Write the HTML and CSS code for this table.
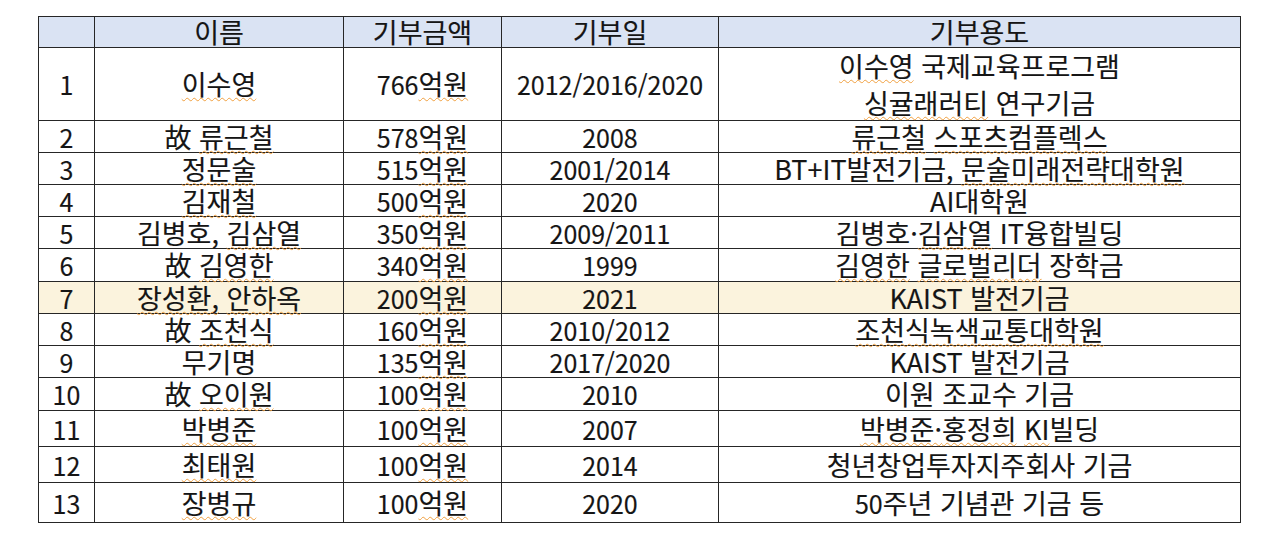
FILE: index.html
```html
<!DOCTYPE html>
<html lang="ko">
<head>
<meta charset="utf-8">
<title>기부 현황</title>
<link rel="stylesheet" href="styles.css">
</head>
<body>
<table class="donors">
  <colgroup>
    <col class="c-no"><col class="c-name"><col class="c-amt"><col class="c-date"><col class="c-use">
  </colgroup>
  <thead>
    <tr class="r-head"><th></th><th>이름</th><th>기부금액</th><th>기부일</th><th>기부용도</th></tr>
  </thead>
  <tbody>
    <tr class="r-tall"><td class="num">1</td><td><span class="sp">이수영</span></td><td><span class="n">766</span><span class="sp">억원</span></td><td class="num">2012/2016/2020</td><td class="two"><div class="ln"><span class="sp">이수영</span> 국제교육프로그램</div><div class="ln"><span class="sp">싱귤래러티</span> 연구기금</div></td></tr>
    <tr class="r32"><td class="num">2</td><td>故 <span class="sp">류근철</span></td><td><span class="n">578</span><span class="sp">억원</span></td><td class="num">2008</td><td><span class="sp">류근철</span> <span class="sp">스포츠컴플렉스</span></td></tr>
    <tr class="r32"><td class="num">3</td><td><span class="sp">정문술</span></td><td><span class="n">515</span><span class="sp">억원</span></td><td class="num">2001/2014</td><td>BT+IT발전기금, <span class="sp">문술미래전략대학원</span></td></tr>
    <tr class="r32"><td class="num">4</td><td><span class="sp">김재철</span></td><td><span class="n">500</span><span class="sp">억원</span></td><td class="num">2020</td><td>AI대학원</td></tr>
    <tr class="r32"><td class="num">5</td><td>김병호, <span class="sp">김삼열</span></td><td><span class="n">350</span><span class="sp">억원</span></td><td class="num">2009/2011</td><td>김병호·<span class="sp">김삼열</span> IT융합빌딩</td></tr>
    <tr class="r33"><td class="num">6</td><td>故 <span class="sp">김영한</span></td><td><span class="n">340</span><span class="sp">억원</span></td><td class="num">1999</td><td><span class="sp">김영한</span> <span class="sp">글로벌리더</span> 장학금</td></tr>
    <tr class="r32 hl"><td class="num">7</td><td><span class="sp">장성환,</span> <span class="sp">안하옥</span></td><td><span class="n">200</span><span class="sp">억원</span></td><td class="num">2021</td><td>KAIST 발전기금</td></tr>
    <tr class="r32"><td class="num">8</td><td>故 <span class="sp">조천식</span></td><td><span class="n">160</span><span class="sp">억원</span></td><td class="num">2010/2012</td><td><span class="sp">조천식녹색교통대학원</span></td></tr>
    <tr class="r32"><td class="num">9</td><td>무기명</td><td><span class="n">135</span><span class="sp">억원</span></td><td class="num">2017/2020</td><td>KAIST 발전기금</td></tr>
    <tr class="r33"><td class="num">10</td><td>故 <span class="sp">오이원</span></td><td><span class="n">100</span><span class="sp">억원</span></td><td class="num">2010</td><td>이원 조교수 기금</td></tr>
    <tr class="r36"><td class="num">11</td><td><span class="sp">박병준</span></td><td><span class="n">100</span><span class="sp">억원</span></td><td class="num">2007</td><td><span class="sp">박병준·</span><span class="sp">홍정희</span> <span class="sp">KI</span>빌딩</td></tr>
    <tr class="r36"><td class="num">12</td><td><span class="sp">최태원</span></td><td><span class="n">100</span><span class="sp">억원</span></td><td class="num">2014</td><td>청년창업투자지주회사 기금</td></tr>
    <tr class="r40"><td class="num">13</td><td><span class="sp">장병규</span></td><td><span class="n">100</span><span class="sp">억원</span></td><td class="num">2020</td><td><span class="n">50</span>주년 기념관 기금 등</td></tr>
  </tbody>
</table>
</body>
</html>
```
FILE: styles.css
```css
html, body {
  margin: 0;
  padding: 0;
  background: #ffffff;
}
body {
  padding: 16px 0 0 38px;
  font-family: "Noto Sans CJK KR", "Noto Sans", sans-serif;
  color: #151515;
}
.donors {
  border-collapse: collapse;
  table-layout: fixed;
  width: 1202px;
  font-size: 27px;
  line-height: 28px;
  border: 1.5px solid #262626;
}
.c-no { width: 56px; }
.c-name { width: 249px; }
.c-amt { width: 158px; }
.c-date { width: 217px; }
.c-use { width: 522px; }
.donors th,
.donors td {
  border: 1px solid #262626;
  padding: 0;
  text-align: center;
  vertical-align: middle;
  font-weight: normal;
  white-space: nowrap;
  -webkit-text-stroke: 0.15px #151515;
}
.donors th {
  background: #dae3f3;
}
.donors td.num,
.n {
  font-size: 25px;
}
.r-head { height: 31px; }
.r-tall { height: 73px; }
.r32 { height: 32px; }
.r33 { height: 33px; }
.r36 { height: 36px; }
.r40 { height: 40px; }
.hl td { background: #fbf3dd; }
.two {
  display: table-cell;
}
.ln {
  height: 34px;
  line-height: 34px;
}
.ln + .ln {
  margin-top: 3px;
}
.sp {
  text-decoration: underline wavy #f0a040;
  text-decoration-thickness: 1px;
  text-underline-offset: 2px;
  text-decoration-skip-ink: none;
}
```
